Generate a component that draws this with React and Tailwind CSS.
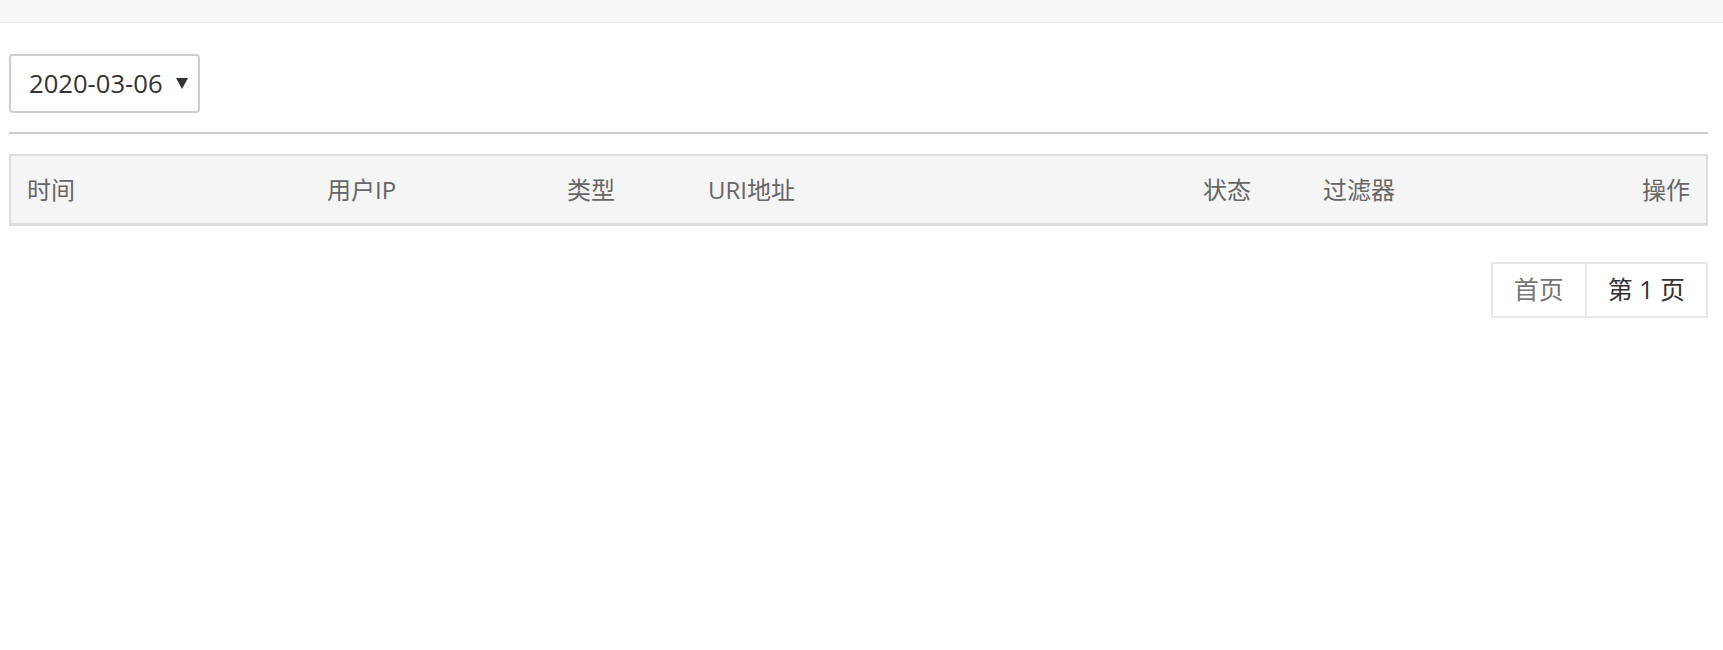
const columns = [
  { label: "时间", width: "w-[300px]" },
  { label: "用户IP", width: "w-[240px]" },
  { label: "类型", width: "w-[141px]" },
  { label: "URI地址", width: "w-[495px]" },
  { label: "状态", width: "w-[120px]" },
  { label: "过滤器", width: "" },
];

export default function App() {
  return (
    <div
      className="min-h-[650px] bg-white text-[#333]"
      style={{ fontFamily: '"Open Sans", "Noto Sans CJK SC", sans-serif' }}
    >
      <div className="h-[23px] bg-[#f8f8f8] border-b border-[#e7e7e7]" />

      <div className="pl-[9px] pr-[15px]">
        <div className="mt-[31px] flex">
          <div className="h-[59px] w-[191px] flex items-center border-2 border-[#cfcfcf] rounded-[4px] pl-[18px] pr-[10px]">
            <span className="text-[25.6px] leading-none text-[#333]">2020-03-06</span>
            <svg className="ml-auto" width="12" height="11" viewBox="0 0 12 11">
              <polygon points="0,0 12,0 6,11" fill="#333" />
            </svg>
          </div>
        </div>

        <div className="mt-[19px] h-[2px] bg-[#cccccc]" />

        <div className="mt-[20px] flex h-[72px] border-2 border-b-[3px] border-[#dddddd] bg-[#f5f5f5] text-[24px] text-[#666]">
          {columns.map((c) => (
            <div key={c.label} className={`${c.width} ${c.width ? "shrink-0" : "flex-1"} flex items-center px-4`}>
              {c.label}
            </div>
          ))}
          <div className="w-[140px] shrink-0 flex items-center justify-end px-4">操作</div>
        </div>

        <div className="mt-[36px] flex justify-end">
          <div className="flex h-[56px] border-2 border-[#e8e8e8] text-[25px]">
            <button className="px-[21px] text-[#777] border-r-2 border-[#e8e8e8]">首页</button>
            <button className="px-[21px] text-[#333]">第 1 页</button>
          </div>
        </div>
      </div>
    </div>
  );
}
